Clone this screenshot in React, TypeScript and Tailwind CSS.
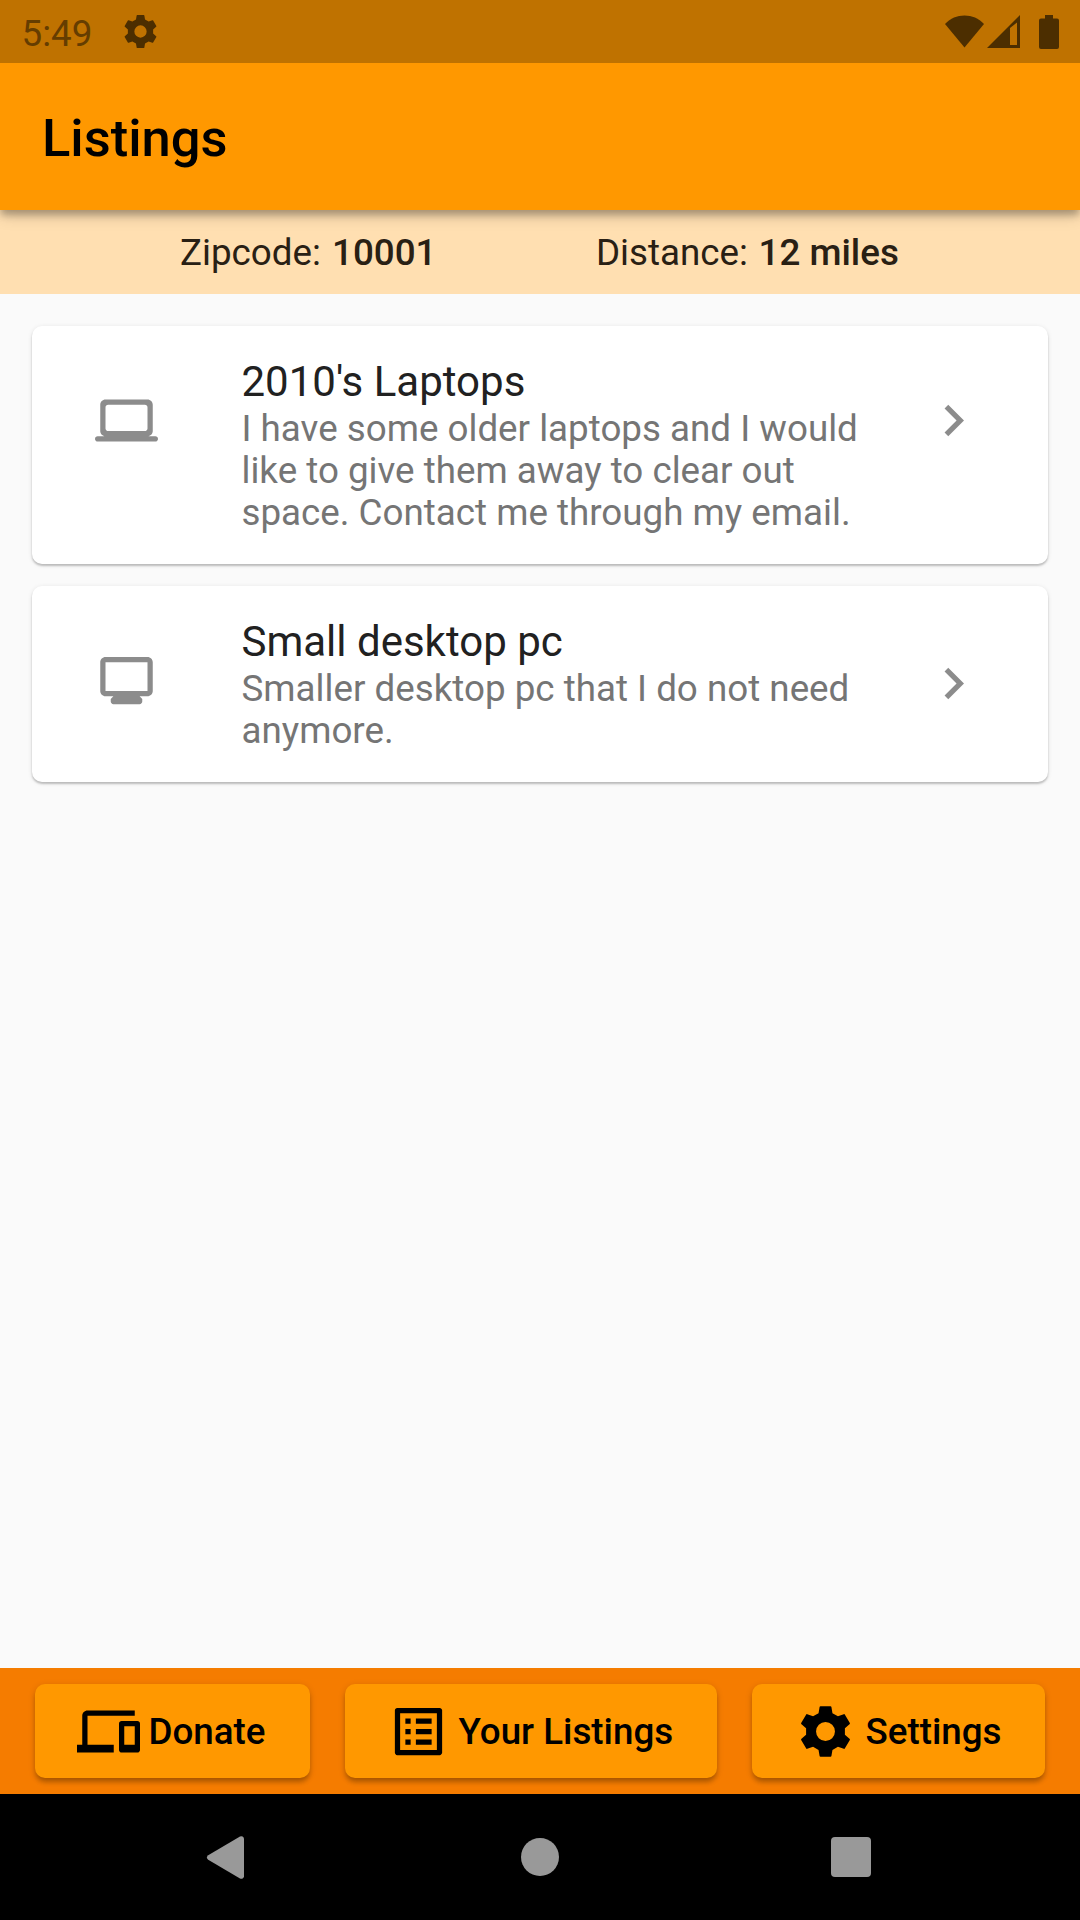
import * as React from "react"
import { MdChevronRight, MdDevices, MdListAlt } from "react-icons/md"

interface Listing {
  title: string;
  body: string;
  kind: 'laptop' | 'desktop';
}

const listings: Listing[] = [
  {
    title: "2010's Laptops",
    body: "I have some older laptops and I would like to give them away to clear out space. Contact me through my email.",
    kind: 'laptop',
  },
  {
    title: "Small desktop pc",
    body: "Smaller desktop pc that I do not need anymore.",
    kind: 'desktop',
  },
]

const LaptopIcon = () => (
  <svg width="63" height="63" viewBox="0 0 24 24" fill="currentColor">
    <path d="M20 18c1.1 0 2-.9 2-2V6c0-1.1-.9-2-2-2H4c-1.1 0-2 .9-2 2v10c0 1.1.9 2 2 2H1c-.55 0-1 .45-1 1s.45 1 1 1h22c.55 0 1-.45 1-1s-.45-1-1-1h-3zM5 6h14c.55 0 1 .45 1 1v8c0 .55-.45 1-1 1H5c-.55 0-1-.45-1-1V7c0-.55.45-1 1-1z" />
  </svg>
)

const DesktopIcon = () => (
  <svg width="63" height="63" viewBox="0 0 24 24" fill="currentColor">
    <path d="M20 3H4c-1.1 0-2 .9-2 2v11c0 1.1.9 2 2 2h3l-1 1v1c0 .55.45 1 1 1h10c.55 0 1-.45 1-1v-1l-1-1h3c1.1 0 2-.9 2-2V5c0-1.1-.9-2-2-2zm0 13H4V5h16v11z" />
  </svg>
)

// Six toothed gear, centred on the origin
const GearIcon: React.FC<{ size: number }> = ({ size }) => (
  <svg width={size} height={size} viewBox="-12 -12 24 24" fill="currentColor" fillRule="evenodd">
    <path d="M-2.65-7L-2.25-9.3Q-2.2-9.6-1.9-9.6H1.9Q2.2-9.6 2.25-9.3L2.65-7L4.74-5.79L6.95-6.6Q7.24-6.7 7.4-6.42L9.27-3.2Q9.4-2.94 9.15-2.75L7.39-1.2V1.2L9.15 2.75Q9.4 2.94 9.27 3.2L7.4 6.42Q7.24 6.7 6.95 6.6L4.74 5.79L2.65 7L2.25 9.3Q2.2 9.6 1.9 9.6H-1.9Q-2.2 9.6-2.25 9.3L-2.65 7L-4.74 5.79L-6.95 6.6Q-7.24 6.7-7.4 6.42L-9.27 3.2Q-9.4 2.94-9.15 2.75L-7.39 1.2V-1.2L-9.15-2.75Q-9.4-2.94-9.27-3.2L-7.4-6.42Q-7.24-6.7-6.95-6.6L-4.74-5.79zM-3.6 0a3.6 3.6 0 1 0 7.2 0a3.6 3.6 0 1 0-7.2 0z" />
  </svg>
)

const StatusBar = () => (
  <div className="relative z-20 flex h-[63px] shrink-0 items-center bg-[#bf7200] text-[#4c2e00]">
    <span className="ml-[21.5px] mt-[5px] w-[98px] text-[36.75px] leading-none text-[#653d00]">5:49</span>
    <GearIcon size={41} />
    <div className="ml-auto flex items-center">
      <svg width="39" height="33" viewBox="0 0 39 33" fill="currentColor">
        <path d="M19.5 32.5L0 9C5.5 3.3 12 .5 19.5.5S33.5 3.3 39 9z" />
      </svg>
      <svg className="ml-[3px]" width="33" height="33" viewBox="0 0 33 33" fill="currentColor" fillRule="evenodd">
        <path d="M0 33L33 0v33zM23 13v17h7V7.5z" />
      </svg>
      <svg className="ml-[19px] mr-[21px]" width="20" height="34" viewBox="0 0 20 34" fill="currentColor">
        <path d="M6 0h8v3.5h4a2 2 0 0 1 2 2V32a2 2 0 0 1-2 2H2a2 2 0 0 1-2-2V5.5a2 2 0 0 1 2-2h4z" />
      </svg>
    </div>
  </div>
)

const ListingCard: React.FC<{ listing: Listing }> = ({ listing }) => {
  const isLaptop = listing.kind === 'laptop'

  return (
    <div
      className={`flex items-start rounded-[10px] bg-white shadow-[0_2px_2px_rgba(0,0,0,0.2),0_1px_5px_rgba(0,0,0,0.1)] ${
        isLaptop ? 'h-[238px]' : 'h-[196px]'
      }`}
    >
      <div className="ml-[62.5px] mt-[63px] text-[#8c8c8c]">
        {isLaptop ? <LaptopIcon /> : <DesktopIcon />}
      </div>
      <div className="ml-[84px] w-[640px] pt-[31px]">
        <h2 className="text-[42px] leading-[49px] text-[#212121]">{listing.title}</h2>
        <p className="pt-[2px] text-[36.75px] leading-[42px] text-[#757575]">{listing.body}</p>
      </div>
      <MdChevronRight size={63} className={`ml-[40.5px] text-[#8c8c8c] ${isLaptop ? 'mt-[63px]' : 'mt-[66px]'}`} />
    </div>
  )
}

interface NavButtonProps {
  icon: React.ReactNode;
  label: string;
  className: string;
}

const NavButton: React.FC<NavButtonProps> = ({ icon, label, className }) => (
  <button
    className={`flex h-[94px] items-center gap-[8.5px] whitespace-nowrap rounded-[10px] bg-[#ff9800] pl-[42px] text-[36.75px] font-medium text-black shadow-[0_5px_5px_-1px_rgba(0,0,0,0.22),0_2px_7px_rgba(0,0,0,0.16)] ${className}`}
  >
    {icon}
    <span className="pt-[2px]">{label}</span>
  </button>
)

export default function App() {
  return (
    <div className="flex h-[1920px] w-[1080px] flex-col overflow-hidden bg-[#fafafa] font-['Roboto',sans-serif]">
      <StatusBar />
      <header className="relative z-10 flex h-[147px] shrink-0 items-center bg-[#ff9800] pl-[42px] shadow-[0_6px_7px_-1px_rgba(0,0,0,0.24),0_4px_16px_rgba(0,0,0,0.2)]">
        <h1 className="mt-[3px] text-[52.5px] font-medium leading-none text-black">Listings</h1>
      </header>

      <div className="flex h-[84px] shrink-0 items-center bg-[#ffdfb1] pl-[180px] pt-[2px] text-[36.75px] text-[#292014]">
        <p className="w-[416px]">Zipcode: <span className="ml-[2px] font-medium">10001</span></p>
        <p>Distance: <span className="ml-[1.5px] font-medium">12 miles</span></p>
      </div>

      <main className="flex flex-1 flex-col gap-[22px] px-[32px] pt-[32px]">
        {listings.map((listing) => (
          <ListingCard key={listing.title} listing={listing} />
        ))}
      </main>

      <nav className="flex h-[126px] shrink-0 items-center justify-evenly bg-[#f57c00]">
        <NavButton icon={<MdDevices size={63} />} label="Donate" className="w-[275px]" />
        <NavButton icon={<MdListAlt size={63} />} label="Your Listings" className="w-[372px]" />
        <NavButton icon={<GearIcon size={63} />} label="Settings" className="w-[293px]" />
      </nav>

      {/* Android system navigation */}
      <div className="flex h-[126px] shrink-0 items-center bg-black text-[#999999]">
        <svg className="ml-[206px]" width="39" height="43" viewBox="0 0 39 43" fill="currentColor">
          <path d="M34 .5a2.7 2.7 0 0 1 4 2.3v37.4a2.7 2.7 0 0 1-4 2.3L2.2 23.8a2.7 2.7 0 0 1 0-4.6z" />
        </svg>
        <div className="ml-[276px] size-[38px] rounded-full bg-[#999999]" />
        <div className="ml-[272px] size-[40px] rounded-[4px] bg-[#999999]" />
      </div>
    </div>
  )
}
